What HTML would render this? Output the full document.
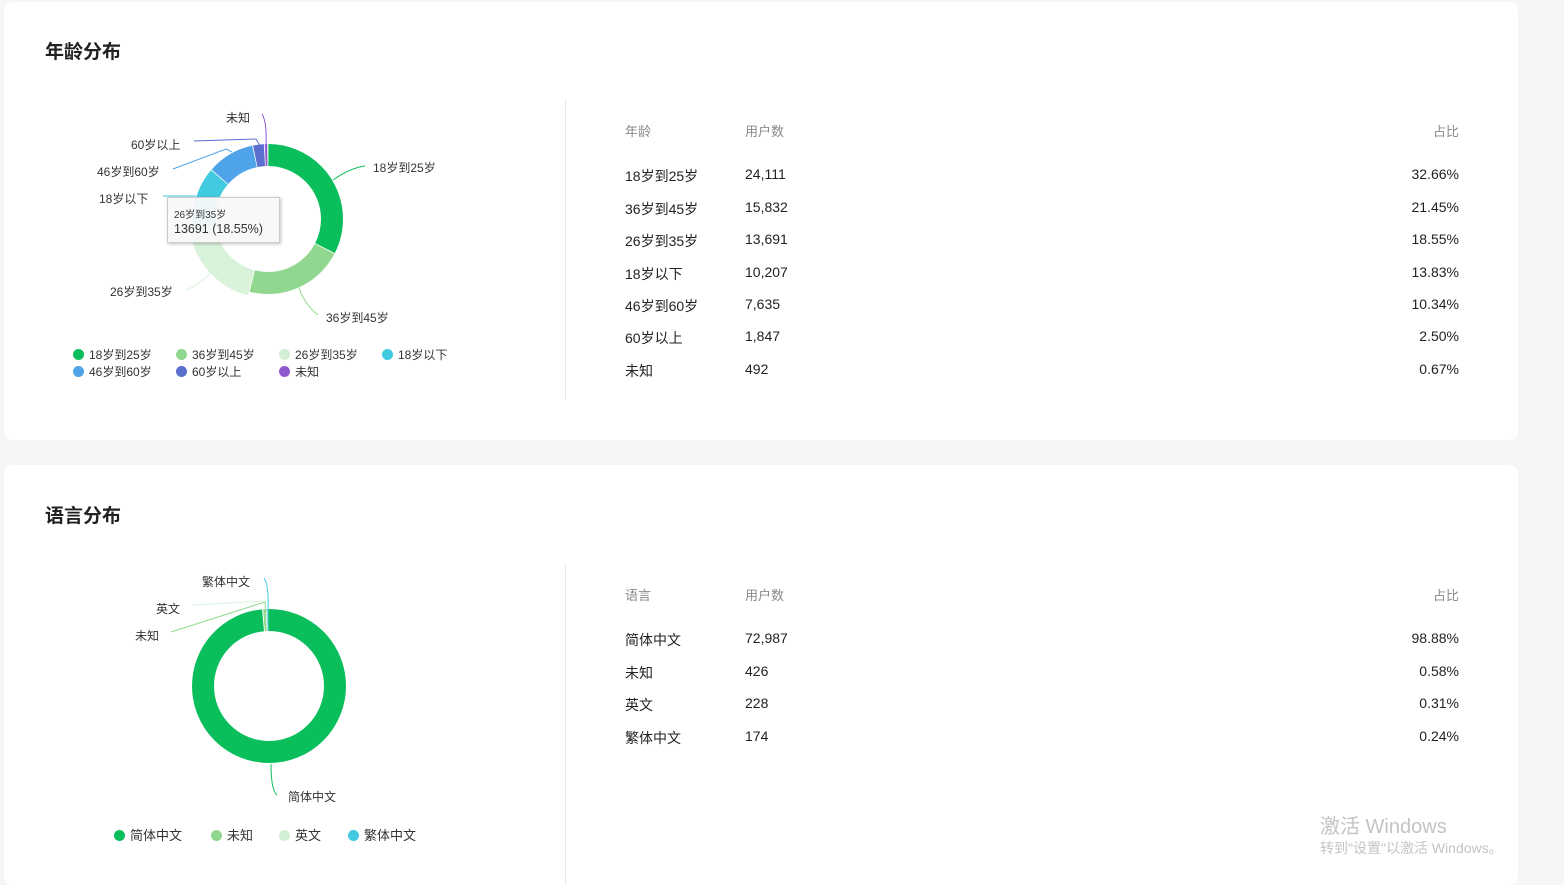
<!DOCTYPE html>
<html><head><meta charset="utf-8"><style>
body{margin:0;width:1564px;height:867px;background:#f5f6f8;font-family:"Liberation Sans","Noto Sans CJK SC",sans-serif;position:relative;overflow:hidden;color:#222}
.card{position:absolute;left:4px;width:1514px;background:#fff;border-radius:8px}
.t{position:absolute;white-space:nowrap}
.title{font-size:19px;font-weight:bold;left:41px;color:#222}
.div{position:absolute;left:561px;width:1px;background:#e6e6e6}
.h{font-size:13px;color:#8a8a8a}
.r{font-size:14px;color:#222}
.rt{right:59px;text-align:right}
.lb{font-size:12px;color:#333}
.dot{display:inline-block;width:11px;height:11px;border-radius:50%;vertical-align:-1px;margin-right:5px}
</style></head><body>
<div class="card" style="top:2px;height:438px">
<div class="t title" style="top:35px">年龄分布</div>
<div class="div" style="top:98px;height:300px"></div>
<div class="t h" style="left:621px;top:119px">年龄</div><div class="t h" style="left:741px;top:119px">用户数</div><div class="t h rt" style="top:119px">占比</div>
<div class="t r" style="left:621px;top:164px">18岁到25岁</div><div class="t r" style="left:741px;top:164px">24,111</div><div class="t r rt" style="top:164px">32.66%</div>
<div class="t r" style="left:621px;top:197px">36岁到45岁</div><div class="t r" style="left:741px;top:197px">15,832</div><div class="t r rt" style="top:197px">21.45%</div>
<div class="t r" style="left:621px;top:229px">26岁到35岁</div><div class="t r" style="left:741px;top:229px">13,691</div><div class="t r rt" style="top:229px">18.55%</div>
<div class="t r" style="left:621px;top:262px">18岁以下</div><div class="t r" style="left:741px;top:262px">10,207</div><div class="t r rt" style="top:262px">13.83%</div>
<div class="t r" style="left:621px;top:294px">46岁到60岁</div><div class="t r" style="left:741px;top:294px">7,635</div><div class="t r rt" style="top:294px">10.34%</div>
<div class="t r" style="left:621px;top:326px">60岁以上</div><div class="t r" style="left:741px;top:326px">1,847</div><div class="t r rt" style="top:326px">2.50%</div>
<div class="t r" style="left:621px;top:359px">未知</div><div class="t r" style="left:741px;top:359px">492</div><div class="t r rt" style="top:359px">0.67%</div>
</div>
<div class="card" style="top:465px;height:420px">
<div class="t title" style="top:36px">语言分布</div>
<div class="div" style="top:100px;height:320px"></div>
<div class="t h" style="left:621px;top:120px">语言</div><div class="t h" style="left:741px;top:120px">用户数</div><div class="t h rt" style="top:120px">占比</div>
<div class="t r" style="left:621px;top:165px">简体中文</div><div class="t r" style="left:741px;top:165px">72,987</div><div class="t r rt" style="top:165px">98.88%</div>
<div class="t r" style="left:621px;top:198px">未知</div><div class="t r" style="left:741px;top:198px">426</div><div class="t r rt" style="top:198px">0.58%</div>
<div class="t r" style="left:621px;top:230px">英文</div><div class="t r" style="left:741px;top:230px">228</div><div class="t r rt" style="top:230px">0.31%</div>
<div class="t r" style="left:621px;top:263px">繁体中文</div><div class="t r" style="left:741px;top:263px">174</div><div class="t r rt" style="top:263px">0.24%</div>
</div>

<svg style="position:absolute;left:0;top:0" width="1564" height="867">
<g transform="translate(268,219) rotate(-90)" fill="none" stroke-width="22">
<circle r="64" pathLength="100" stroke="#0abf5b" stroke-dasharray="32.46 67.54" stroke-dashoffset="-0.1"/>
<circle r="64" pathLength="100" stroke="#91d78f" stroke-dasharray="21.25 78.75" stroke-dashoffset="-32.76"/>
<circle r="66" pathLength="100" stroke="#d9f2da" stroke-width="26" stroke-dasharray="18.35 81.65" stroke-dashoffset="-54.21"/>
<circle r="64" pathLength="100" stroke="#42cbe0" stroke-dasharray="13.63 86.37" stroke-dashoffset="-72.76"/>
<circle r="64" pathLength="100" stroke="#4fa3e8" stroke-dasharray="10.14 89.86" stroke-dashoffset="-86.59"/>
<circle r="64" pathLength="100" stroke="#5a6fce" stroke-dasharray="2.3 97.7" stroke-dashoffset="-96.93"/>
<circle r="64" pathLength="100" stroke="#9059d0" stroke-dasharray="0.5 99.5" stroke-dashoffset="-99.43"/>
</g>
<g fill="none" stroke-width="1">
<path d="M333,180 Q350,168 365,166" stroke="#0abf5b"/>
<path d="M299,288 Q305,305 318,315" stroke="#91d78f"/>
<path d="M212,271 Q200,285 186,290" stroke="#d9f2da"/>
<path d="M163,196 L196,196" stroke="#42cbe0"/>
<path d="M173,169 L226,149 L232,152" stroke="#4fa3e8"/>
<path d="M194,141 L256,139 L260,146" stroke="#5a6fce"/>
<path d="M262,114 Q267,122 266,144" stroke="#9059d0"/>
</g>
<g transform="translate(269,686) rotate(-90)" fill="none" stroke-width="22">
<circle r="66" pathLength="100" stroke="#0abf5b" stroke-dasharray="98.68 1.32" stroke-dashoffset="0"/>
<circle r="66" pathLength="100" stroke="#91d78f" stroke-dasharray="0.5 99.5" stroke-dashoffset="-98.9"/>
<circle r="66" pathLength="100" stroke="#d9f2da" stroke-dasharray="0.3 99.7" stroke-dashoffset="-99.45"/>
<circle r="66" pathLength="100" stroke="#42cbe0" stroke-dasharray="0.25 99.75" stroke-dashoffset="-99.75"/>
</g>
<g fill="none" stroke-width="1">
<path d="M271,764 Q271,790 277,795" stroke="#0abf5b"/>
<path d="M171,632 L265,602 L266,612" stroke="#91d78f"/>
<path d="M193,605 L266,601" stroke="#d9f2da"/>
<path d="M264,578 Q269,585 268,610" stroke="#42cbe0"/>
</g>
</svg>

<div class="t lb" style="left:226px;top:109px">未知</div>
<div class="t lb" style="left:131px;top:136px">60岁以上</div>
<div class="t lb" style="left:97px;top:163px">46岁到60岁</div>
<div class="t lb" style="left:99px;top:190px">18岁以下</div>
<div class="t lb" style="left:373px;top:159px">18岁到25岁</div>
<div class="t lb" style="left:110px;top:283px">26岁到35岁</div>
<div class="t lb" style="left:326px;top:309px">36岁到45岁</div>
<div class="t" style="left:167px;top:197px;width:113px;height:46px;background:rgba(248,248,248,.95);border:1px solid #ccc;box-shadow:1px 1px 3px rgba(0,0,0,.25);font-size:10px;color:#333;padding:0 6px;box-sizing:border-box">
<div style="margin-top:8px">26岁到35岁</div><div style="font-size:12.5px;margin-top:1px">13691 (18.55%)</div></div>
<div class="t lb" style="left:73px;top:346px"><span class="dot" style="background:#0abf5b"></span>18岁到25岁</div>
<div class="t lb" style="left:176px;top:346px"><span class="dot" style="background:#91d78f"></span>36岁到45岁</div>
<div class="t lb" style="left:279px;top:346px"><span class="dot" style="background:#d3efd3"></span>26岁到35岁</div>
<div class="t lb" style="left:382px;top:346px"><span class="dot" style="background:#42cbe0"></span>18岁以下</div>
<div class="t lb" style="left:73px;top:363px"><span class="dot" style="background:#4fa3e8"></span>46岁到60岁</div>
<div class="t lb" style="left:176px;top:363px"><span class="dot" style="background:#5a6fce"></span>60岁以上</div>
<div class="t lb" style="left:279px;top:363px"><span class="dot" style="background:#9059d0"></span>未知</div>

<div class="t lb" style="left:202px;top:573px">繁体中文</div>
<div class="t lb" style="left:156px;top:600px">英文</div>
<div class="t lb" style="left:135px;top:627px">未知</div>
<div class="t lb" style="left:288px;top:788px">简体中文</div>
<div class="t" style="left:114px;top:825px;font-size:13px;color:#333"><span class="dot" style="background:#0abf5b"></span>简体中文</div>
<div class="t" style="left:211px;top:825px;font-size:13px;color:#333"><span class="dot" style="background:#91d78f"></span>未知</div>
<div class="t" style="left:279px;top:825px;font-size:13px;color:#333"><span class="dot" style="background:#d3efd3"></span>英文</div>
<div class="t" style="left:348px;top:825px;font-size:13px;color:#333"><span class="dot" style="background:#42cbe0"></span>繁体中文</div>

<div class="t" style="left:1320px;top:810px;font-size:20px;color:#c4c4c4">激活 Windows</div>
<div class="t" style="left:1320px;top:838px;font-size:14px;color:#c4c4c4">转到"设置"以激活 Windows。</div>
</body></html>
